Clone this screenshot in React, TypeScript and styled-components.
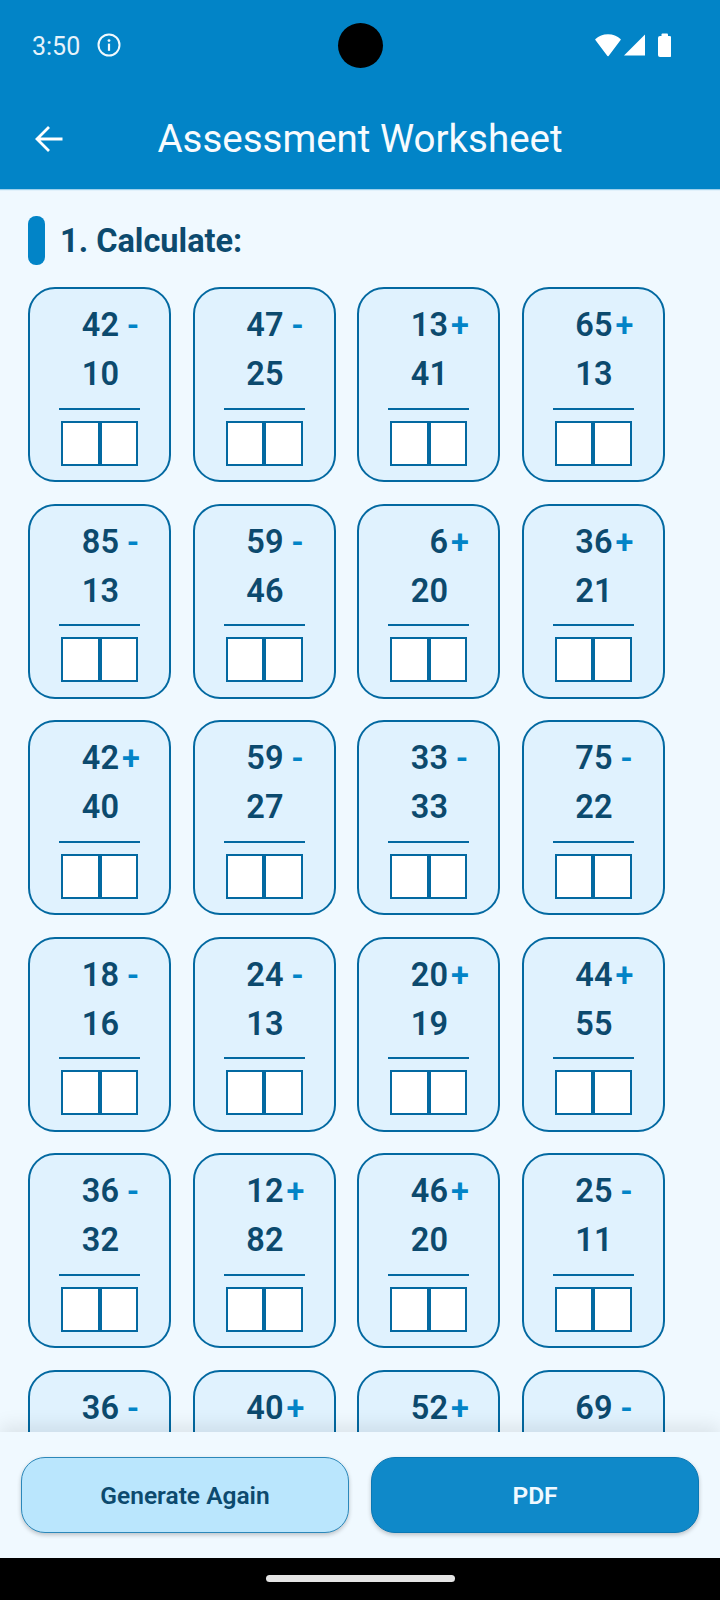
import React from "react";
import styled, { createGlobalStyle } from "styled-components";

const Global = createGlobalStyle`
  html, body { margin: 0; padding: 0; background: #000; }
  * { box-sizing: border-box; }
  body { font-family: Roboto, "Liberation Sans", sans-serif; }
`;

const Screen = styled.div`
  width: 720px;
  height: 1600px;
  display: flex;
  flex-direction: column;
  background: #f0f9ff;
  overflow: hidden;
`;

const Header = styled.header`
  flex: none;
  height: 188.5px;
  background: #0284c7;
  color: #fff;
  display: flex;
  flex-direction: column;
  box-shadow: 0 1px 1px rgba(2, 132, 199, 0.35);
`;

const StatusBar = styled.div`
  height: 90px;
  padding: 0 49px 0 32px;
  display: flex;
  align-items: center;
  justify-content: space-between;
  position: relative;
`;

const StatusLeft = styled.div`
  display: flex;
  align-items: center;
  gap: 17px;
`;

const Time = styled.span`
  font-size: 25px;
  line-height: 30px;
  font-weight: 400;
  color: #e6f3fb;
  padding-top: 4px;
`;

const StatusRight = styled.div`
  display: flex;
  align-items: center;
`;

const Camera = styled.div`
  position: absolute;
  left: 337.5px;
  top: 22.5px;
  width: 45px;
  height: 45px;
  border-radius: 50%;
  background: #000;
`;

const AppBar = styled.div`
  flex: 1;
  position: relative;
  display: flex;
  align-items: center;
  justify-content: center;
`;

const BackIcon = styled.svg`
  position: absolute;
  left: 35px;
  top: 35px;
`;

const Title = styled.h1`
  margin: 0;
  font-size: 38.5px;
  font-weight: 400;
  line-height: 44px;
  color: #f7fbfe;
`;

const Body = styled.main`
  flex: 1;
  min-height: 0;
  overflow: hidden;
  padding: 27.5px 0 0 28px;
`;

const SectionHead = styled.div`
  display: flex;
  align-items: center;
  gap: 15px;
  height: 49px;
  margin-bottom: 22px;
`;

const Accent = styled.span`
  width: 17px;
  height: 49px;
  border-radius: 8px;
  background: #0284c7;
`;

const SectionTitle = styled.h2`
  margin: 0;
  font-size: 32.5px;
  font-weight: 700;
  color: #0c4a6e;
`;

const Grid = styled.div`
  display: grid;
  grid-template-columns: repeat(4, 143px);
  column-gap: 21.5px;
  row-gap: 21.5px;
`;

const Card = styled.div`
  height: 195px;
  padding-top: 11px;
  background: #e0f2fe;
  border: 2px solid #0369a1;
  border-radius: 27px;
  display: flex;
  flex-direction: column;
  align-items: center;
`;

const NumberRow = styled.div`
  width: 89px;
  height: 49px;
  display: flex;
  line-height: 50px;
  font-size: 32.5px;
  font-weight: 600;
`;

const Num = styled.span`
  flex: none;
  width: 64px;
  text-align: right;
  color: #0c4a6e;
`;

const Op = styled.span<{ $minus: boolean }>`
  flex: none;
  width: 27px;
  margin-left: ${(p) => (p.$minus ? "-2px" : "-1.5px")};
  text-align: center;
  padding-left: ${(p) => (p.$minus ? "5px" : "0")};
  color: #0284c7;
`;

const Rule = styled.div`
  flex: none;
  width: 81px;
  height: 2px;
  margin-top: 9.5px;
  background: #0369a1;
`;

const Boxes = styled.div`
  margin-top: 11px;
  display: flex;
`;

const Box = styled.div`
  width: 38.5px;
  height: 45px;
  background: #fff;
  border: 2px solid #0369a1;
`;

const Footer = styled.footer`
  flex: none;
  height: 126px;
  padding: 25px 21px;
  display: flex;
  gap: 22px;
  background: #f0f9ff;
  position: relative;
  box-shadow: 0 -6px 18px rgba(0, 0, 0, 0.09);
`;

const Button = styled.button<{ $primary?: boolean }>`
  flex: 1;
  height: 76px;
  border-radius: 24px;
  border: 1.5px solid ${(p) => (p.$primary ? "#0a78b4" : "#2b88ba")};
  background: ${(p) => (p.$primary ? "#0f89c9" : "#bae6fd")};
  color: ${(p) => (p.$primary ? "#f0f9ff" : "#0c4a6e")};
  font-family: Roboto, "Liberation Sans", sans-serif;
  font-size: 24.5px;
  font-weight: 600;
  box-shadow: 0 2px 4px rgba(0, 0, 0, 0.22);
`;

const NavBar = styled.div`
  flex: none;
  height: 42px;
  background: #000;
  display: flex;
  justify-content: center;
  padding-top: 17px;
`;

const Pill = styled.div`
  width: 189px;
  height: 7px;
  border-radius: 4px;
  background: #e4e4e4;
`;

const problems: [string, string, string][] = [
  ["42", "-", "10"], ["47", "-", "25"], ["13", "+", "41"], ["65", "+", "13"],
  ["85", "-", "13"], ["59", "-", "46"], ["6", "+", "20"], ["36", "+", "21"],
  ["42", "+", "40"], ["59", "-", "27"], ["33", "-", "33"], ["75", "-", "22"],
  ["18", "-", "16"], ["24", "-", "13"], ["20", "+", "19"], ["44", "+", "55"],
  ["36", "-", "32"], ["12", "+", "82"], ["46", "+", "20"], ["25", "-", "11"],
  ["36", "-", ""], ["40", "+", ""], ["52", "+", ""], ["69", "-", ""],
];

export default function App() {
  return (
    <Screen>
      <Global />
      <Header>
        <StatusBar>
          <StatusLeft>
            <Time>3:50</Time>
            <svg width="24" height="24" viewBox="0 0 24 24" fill="none">
              <circle cx="12" cy="12" r="10.5" stroke="#f2f9fd" strokeWidth="2" />
              <circle cx="12" cy="7.6" r="1.4" fill="#f2f9fd" />
              <rect x="10.9" y="10.6" width="2.2" height="7.2" fill="#f2f9fd" />
            </svg>
          </StatusLeft>
          <Camera />
          <StatusRight>
            <svg width="76" height="24" viewBox="0 0 76 24" fill="#fff">
              <path
                d="M1 6.5C4.200 3.500 8.300 2 13 2C17.700 2 21.800 3.500 25 6.500L13 22.500Z"
                stroke="#fff"
                strokeWidth="1.500"
                strokeLinejoin="round"
              />
              <path d="M29 22.500L50 1.500V22.500Z" />
              <rect x="63" y="3" width="13.500" height="21" rx="2" />
              <rect x="66.500" y="0.500" width="6.500" height="4" rx="1" />
            </svg>
          </StatusRight>
        </StatusBar>
        <AppBar>
          <BackIcon width="29" height="28" viewBox="0 0 29 28" fill="none">
            <path
              d="M27.500 14H2.500M14 2L2 14L14 26"
              stroke="#fff"
              strokeWidth="2.800"
            />
          </BackIcon>
          <Title>Assessment Worksheet</Title>
        </AppBar>
      </Header>
      <Body>
        <SectionHead>
          <Accent />
          <SectionTitle>1. Calculate:</SectionTitle>
        </SectionHead>
        <Grid>
          {problems.map(([a, op, b], i) => (
            <Card key={i}>
              <NumberRow>
                <Num>{a}</Num>
                <Op $minus={op === "-"}>{op}</Op>
              </NumberRow>
              <NumberRow>
                <Num>{b}</Num>
              </NumberRow>
              <Rule />
              <Boxes>
                <Box />
                <Box />
              </Boxes>
            </Card>
          ))}
        </Grid>
      </Body>
      <Footer>
        <Button>Generate Again</Button>
        <Button $primary>PDF</Button>
      </Footer>
      <NavBar>
        <Pill />
      </NavBar>
    </Screen>
  );
}
